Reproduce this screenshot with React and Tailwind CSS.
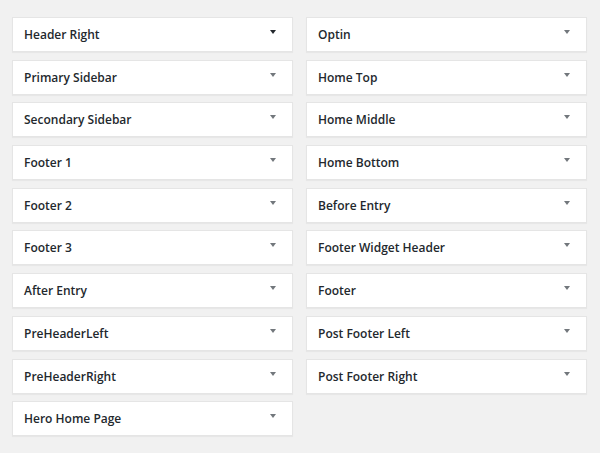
import React from "react";

const left = [
  "Header Right",
  "Primary Sidebar",
  "Secondary Sidebar",
  "Footer 1",
  "Footer 2",
  "Footer 3",
  "After Entry",
  "PreHeaderLeft",
  "PreHeaderRight",
  "Hero Home Page",
];
const right = [
  "Optin",
  "Home Top",
  "Home Middle",
  "Home Bottom",
  "Before Entry",
  "Footer Widget Header",
  "Footer",
  "Post Footer Left",
  "Post Footer Right",
];

function Box({ title, dark }) {
  return (
    <div className="relative h-[35px] bg-white border border-[#e5e5e5] shadow-[0_1px_1px_rgba(0,0,0,0.04)] flex items-center pl-[11px] pt-[1px]">
      <span className="text-[12px] font-semibold text-[#23282d] leading-none">{title}</span>
      <span
        className={
          "absolute right-[16px] top-[12px] w-0 h-0 border-l-[3.5px] border-r-[3.5px] border-t-[4px] border-l-transparent border-r-transparent " +
          (dark ? "border-t-[#23282d]" : "border-t-[#72777c]")
        }
      />
    </div>
  );
}

export default function App() {
  return (
    <div
      className="w-[600px] h-[453px] bg-[#f1f1f1] pl-[12px] pt-[17px] overflow-hidden"
      style={{ fontFamily: '"Open Sans", "Liberation Sans", sans-serif' }}
    >
      <div className="flex gap-[13px] items-start">
        <div className="w-[281px] flex flex-col gap-[7.7px]">
          {left.map((t, i) => (
            <Box key={t} title={t} dark={i === 0} />
          ))}
        </div>
        <div className="w-[281px] flex flex-col gap-[7.7px]">
          {right.map((t) => (
            <Box key={t} title={t} />
          ))}
        </div>
      </div>
    </div>
  );
}
